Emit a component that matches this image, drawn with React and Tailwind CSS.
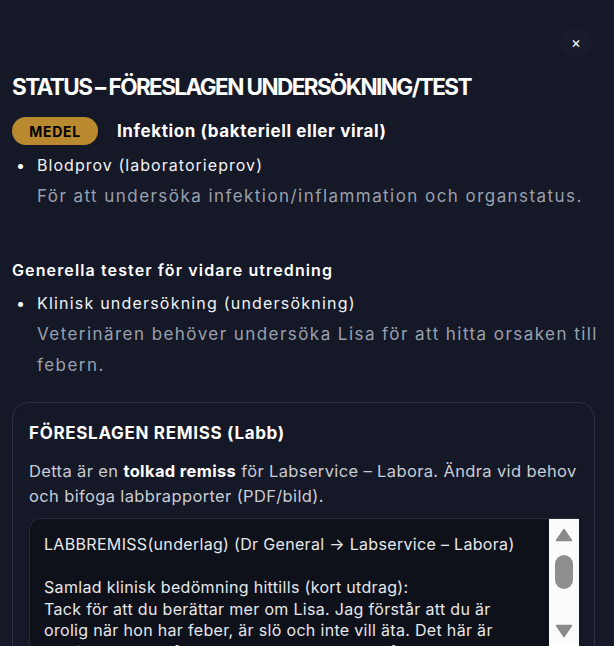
import React from "react";

const font = { fontFamily: "Inter, 'Noto Sans', sans-serif" };

export default function App() {
  return (
    <div className="h-[646px] w-[614px] overflow-hidden bg-[#151827] text-white" style={font}>
      <div className="flex justify-end pt-[26px] pr-[22px]">
        <button className="flex h-8 w-8 items-center justify-center rounded-full bg-white/[0.015] text-[15px] leading-none text-white">
          ×
        </button>
      </div>
      <div className="px-3">
        <h1 className="mt-[15px] text-[22.5px] font-bold uppercase leading-[28px] tracking-[-0.07em] text-white">
          STATUS – FÖRESLAGEN UNDERSÖKNING/TEST
        </h1>
        <div className="mt-[16px] flex items-center gap-[19px]">
          <span className="flex h-[28px] w-[86px] items-center justify-center rounded-full bg-[#b8892f] text-[14px] font-bold tracking-[0.05em] text-black">
            MEDEL
          </span>
          <span className="text-[17px] font-bold leading-[28px] tracking-[0.035em] text-white">
            Infektion (bakteriell eller viral)
          </span>
        </div>
        <ul className="mt-[5px]">
          <li className="flex">
            <span className="w-[25px] shrink-0 pl-[4px] text-[16px] leading-[31px]">•</span>
            <div>
              <div className="text-[16px] leading-[31px] tracking-[0.065em] text-[#f2f2f5]">
                Blodprov (laboratorieprov)
              </div>
              <div className="text-[17px] leading-[31px] tracking-[0.085em] text-[#9aa0ad]">
                För att undersöka infektion/inflammation och organstatus.
              </div>
            </div>
          </li>
        </ul>
        <h2 className="mt-[45px] text-[16px] font-semibold leading-[26px] tracking-[0.07em] text-white">
          Generella tester för vidare utredning
        </h2>
        <ul className="mt-[5px]">
          <li className="flex">
            <span className="w-[25px] shrink-0 pl-[4px] text-[16px] leading-[31px]">•</span>
            <div>
              <div className="text-[16px] leading-[31px] tracking-[0.075em] text-[#f2f2f5]">
                Klinisk undersökning (undersökning)
              </div>
              <div className="text-[17px] leading-[31px] tracking-[0.085em] text-[#9aa0ad]">
                Veterinären behöver undersöka Lisa för att hitta orsaken till febern.
              </div>
            </div>
          </li>
        </ul>
        <div className="mr-[7px] mt-[21px] rounded-[16px] border border-[#2c2f45] bg-[#151827] pl-[16px] pr-[15px] pt-[17px]">
          <h3 className="text-[17px] font-bold leading-[26px] tracking-[0.04em] text-white">
            FÖRESLAGEN REMISS (Labb)
          </h3>
          <p className="mt-[13px] text-[16.5px] leading-[25px] tracking-[0.022em] text-[#c9ccd4]">
            Detta är en <b className="font-bold text-white">tolkad remiss</b> för Labservice
            – Labora. Ändra vid behov och bifoga labbrapporter (PDF/bild).
          </p>
          <div className="mt-[9px] flex h-[200px] overflow-hidden rounded-tl-[12px] border-l border-t border-[#262938] bg-[#0f111a]">
            <div className="min-w-0 flex-1 overflow-hidden pl-[14px] pr-[14px] pt-[15px] text-[16px] leading-[21.5px] tracking-[0.02em] text-[#e6e7ea]">
              <div>LABBREMISS(underlag) (Dr General → Labservice – Labora)</div>
              <div>&nbsp;</div>
              <div>Samlad klinisk bedömning hittills (kort utdrag):</div>
              <div>
                Tack för att du berättar mer om Lisa. Jag förstår att du är orolig
                när hon har feber, är slö och inte vill äta. Det här är vanliga
                tecken på att kroppen kämpar mot något, och det är bra att du
                söker hjälp.
              </div>
            </div>
            <div className="relative w-[30px] shrink-0 bg-[#fcfcfc]">
              <svg className="absolute left-[6px] top-[9px]" width="18" height="14" viewBox="0 0 18 14">
                <path d="M9 1.5 L16.5 12.5 L1.5 12.5 Z" fill="#8a8a8a" stroke="#8a8a8a" strokeWidth="1.5" strokeLinejoin="round" />
              </svg>
              <div className="absolute left-[6px] top-[36px] h-[34px] w-[18px] rounded-full bg-[#8f8f8f]" />
              <svg className="absolute left-[6px] top-[105px]" width="18" height="14" viewBox="0 0 18 14">
                <path d="M1.5 1.5 L16.5 1.5 L9 12.5 Z" fill="#8a8a8a" stroke="#8a8a8a" strokeWidth="1.5" strokeLinejoin="round" />
              </svg>
            </div>
          </div>
        </div>
      </div>
    </div>
  );
}
